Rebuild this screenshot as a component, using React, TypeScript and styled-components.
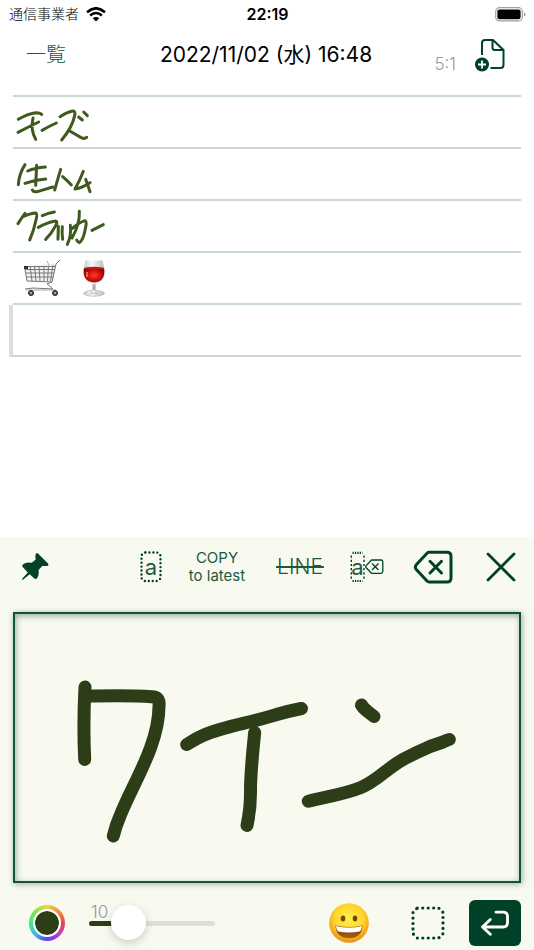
import React, { useState } from "react";
import styled, { createGlobalStyle } from "styled-components";

const GREEN = "#004128";
const INK = "#2c3d18";
const PAPER = "#f8f9ef";

const GlobalStyle = createGlobalStyle`
  * { box-sizing: border-box; }
  body {
    margin: 0;
    background: #fff;
    color: #000;
    font-family: Inter, "Noto Sans CJK JP", sans-serif;
  }
  button, input { font: inherit; }
`;

const Screen = styled.div`
  min-height: 100vh;
  display: flex;
  flex-direction: column;
`;

const StatusBar = styled.div`
  display: grid;
  grid-template-columns: 1fr auto 1fr;
  align-items: center;
  height: 28px;
  padding: 0 8px 0 9px;
`;

const Carrier = styled.div`
  display: flex;
  align-items: center;
  gap: 7px;
  font-size: 14px;
  line-height: 20px;
  font-weight: 300;
`;

const Clock = styled.div`
  font-size: 16px;
  font-weight: 600;
`;

const BatterySlot = styled.div`
  display: flex;
  justify-content: flex-end;
`;

const Header = styled.header`
  display: grid;
  grid-template-columns: 1fr auto 1fr;
  align-items: center;
  height: 54px;
  padding: 0 28px 0 26px;
`;

const ListLink = styled.a`
  color: #1a5a40;
  font-size: 20px;
  line-height: 28px;
  font-weight: 300;
  text-decoration: none;
`;

const Title = styled.h1`
  margin: 0;
  font-size: 21px;
  line-height: 28px;
  font-weight: 400;
`;

const HeaderEnd = styled.div`
  display: flex;
  justify-content: flex-end;
  align-items: center;
  gap: 18px;
`;

const Ratio = styled.span`
  padding-top: 18px;
  color: #98989c;
  font-size: 17px;
  font-weight: 300;
  line-height: 20px;
`;

const IconButton = styled.button<{ $width: number }>`
  display: flex;
  justify-content: center;
  align-items: center;
  flex: none;
  width: ${(p) => p.$width}px;
  padding: 0;
  border: 0;
  background: none;
  color: ${GREEN};
  cursor: pointer;

  svg { flex: none; display: block; }
`;

const Notes = styled.main`
  flex: 1;
  padding: 13px 13px 180px;
`;

const Lines = styled.ul`
  margin: 0;
  padding: 0;
  list-style: none;
  border-top: 2px solid #c9dad4;
`;

const Line = styled.li<{ $current?: boolean }>`
  display: flex;
  align-items: center;
  height: 52px;
  border-bottom: 2px solid #c9dad4;
  margin-left: ${(p) => (p.$current ? "-4px" : "0")};
  border-left: ${(p) => (p.$current ? "4px solid #dedede" : "0")};
`;

const Emojis = styled.span`
  display: flex;
  gap: 22px;
  padding-left: 10px;
`;

const Panel = styled.section`
  padding: 0 13px;
  background: ${PAPER};
`;

const Toolbar = styled.div`
  display: flex;
  align-items: center;
  gap: 20px;
  height: 60px;
`;

const PinSlot = styled.div`
  flex: 1;
  display: flex;
`;

const CopyButton = styled.button`
  width: 68px;
  padding: 0;
  border: 0;
  background: none;
  color: #1a5a40;
  font-size: 15px;
  line-height: 18px;
  white-space: nowrap;
  text-align: center;
  cursor: pointer;
`;

const StrikeButton = styled.button`
  width: 58px;
  padding: 0;
  border: 0;
  background: none;
  color: #1a5a40;
  font-size: 21px;
  font-weight: 300;
  line-height: 24px;
  cursor: pointer;
`;

const Struck = styled.s`
  padding: 0 1px;
  text-decoration: none;
  background: linear-gradient(#1a5a40, #1a5a40) center / 100% 2px no-repeat;
`;

const Canvas = styled.div`
  height: 271px;
  margin-top: 15px;
  border: 2px solid #12543b;
  box-shadow: 1px 1px 6px rgba(0, 65, 40, 0.4), inset 1px 2px 6px rgba(0, 65, 40, 0.4);

  svg { display: block; width: 100%; height: 100%; }
`;

const Controls = styled.div`
  display: flex;
  align-items: center;
  height: 67px;
  padding: 13px 0 0 16px;
`;

const ColorWell = styled.label`
  display: flex;
  flex: none;
  width: 36px;
  height: 36px;
  padding: 4px;
  border-radius: 50%;
  background: conic-gradient(#e8d84a, #f0913c 45deg, #e84545 90deg, #c43cc8 130deg, #6a3cf0 180deg, #3cb8f0 225deg, #40e890 270deg, #8ee050 315deg, #e8d84a);
`;

const ColorInput = styled.input`
  appearance: none;
  width: 28px;
  height: 28px;
  padding: 0;
  border: 2px solid #fff;
  border-radius: 50%;
  background: #fff;
  cursor: pointer;

  &::-webkit-color-swatch-wrapper { padding: 0; }
  &::-webkit-color-swatch { border: 0; border-radius: 50%; }
`;

const SliderGroup = styled.div`
  display: grid;
  width: 126px;
  margin-left: 24px;
`;

const SliderLabel = styled.label`
  grid-area: 1 / 1;
  align-self: start;
  justify-self: start;
  padding-left: 2px;
  color: #98989c;
  font-size: 17px;
  font-weight: 300;
  line-height: 14px;
`;

const Slider = styled.input`
  grid-area: 1 / 1;
  appearance: none;
  width: 126px;
  height: 36px;
  margin: 0;
  background: none;

  &::-webkit-slider-runnable-track {
    height: 5px;
    border-radius: 3px;
    background: linear-gradient(90deg, ${INK} 39px, #dddfd8 39px);
  }
  &::-webkit-slider-thumb {
    appearance: none;
    width: 35px;
    height: 35px;
    margin-top: -16px;
    border-radius: 50%;
    background: #fff;
    box-shadow: 0 3px 10px rgba(0, 0, 0, 0.18);
  }
`;

const ControlsEnd = styled.div`
  flex: 1;
  display: flex;
  justify-content: flex-end;
  align-items: center;
  gap: 20px;
`;

const ReturnButton = styled.button`
  display: flex;
  justify-content: center;
  align-items: center;
  width: 52px;
  height: 46px;
  padding: 0;
  border: 0;
  border-radius: 6px;
  background: ${GREEN};
  color: #fff;
  cursor: pointer;
`;

const Handwriting = ({ label, strokes, top }: { label: string; strokes: string; top: number }) => (
  <svg width="110" height="50" viewBox={`39 ${top} 330 150`} role="img" aria-label={label}>
    <path d={strokes} fill="none" stroke="#3e5a1e" strokeWidth="9" strokeLinecap="round" strokeLinejoin="round" />
  </svg>
);

const CHEESE =
  "M55 88Q85 70 108 68Q120 68 125 73M54 127Q85 111 116 96M99 84Q91 120 107 148M126 121Q145 110 169 99M180 80Q202 66 218 63Q227 62 224 77Q217 112 185 150M208 122Q235 138 246 144Q254 147 260 142M236 81L247 90M251 66L262 77";
const HAM =
  "M75 224Q57 252 55 284M83 243Q105 233 136 231M110 226L107 286M75 280Q105 269 137 267M97 300Q101 308 115 304Q135 298 158 291M182 238Q171 275 164 300M188 260Q203 273 214 285M250 244Q238 275 225 297Q245 294 270 278M257 268L265 290L270 305";
const CRACKER =
  "M54 101Q66 82 75 70M69 80Q90 70 107 69Q113 71 108 90Q101 124 89 150M127 77Q145 69 163 66M115 112Q145 96 167 93Q174 94 167 107Q156 129 137 148M175 109L174 148M187 110Q185 130 188 148M211 106Q215 136 202 163M216 116Q237 97 255 92Q261 94 257 112Q250 152 238 158Q234 157 230 150M238 64Q240 101 216 144M276 121Q294 112 310 104";

const WifiIcon = () => (
  <svg width="20" height="15" viewBox="0 0 20 15" aria-label="Wi-Fi">
    <g fill="none" stroke="#000" strokeWidth="2.6">
      <path d="M1 5.2Q10-2.6 19 5.2" />
      <path d="M4.1 8.6Q10 3.4 15.9 8.6" />
    </g>
    <path d="M10 14.6L6.8 11.3Q10 8.5 13.2 11.3Z" />
  </svg>
);

const BatteryIcon = () => (
  <svg width="31" height="15" viewBox="0 0 31 15" aria-label="バッテリー">
    <rect x=".7" y=".7" width="26.6" height="13.2" rx="4" fill="none" stroke="#a0a0a0" strokeWidth="1.2" />
    <rect x="2.4" y="2.4" width="23.2" height="9.8" rx="2.2" />
    <path d="M29 5Q30.6 6 30.6 7.3T29 9.6Z" fill="#a0a0a0" />
  </svg>
);

const NewPageIcon = () => (
  <svg width="31" height="34" viewBox="0 0 31 34" aria-hidden="true">
    <g fill="none" stroke="currentColor" strokeWidth="2">
      <path d="M7 17V5Q7 2 10 2H18L28.500 12V27Q28.500 30 25.500 30H15.500" />
      <path d="M17.500 2V9.500Q17.500 12 20 12H28.500" />
    </g>
    <circle cx="7" cy="26.500" r="7" fill="currentColor" />
    <path d="M7 22.500V30.500M3 26.500H11" stroke="#fff" strokeWidth="1.800" />
  </svg>
);

const PinIcon = () => (
  <svg width="28" height="28" viewBox="0 0 28 28" fill="currentColor" aria-hidden="true">
    <path d="M15 .5Q16-.4 17 .5L27 10.500Q28 12 26.900 12.800Q24 13.300 21.500 12.800L17.500 17Q18.500 22 15.800 25.600Q14.700 26.500 13.500 25.500L8.600 21.200L2 26.700Q.9 27 1.200 25.700L6.800 19.400L1.700 14Q.9 12.800 1.800 11.500Q5.500 8.500 10.800 9.800L14.700 6.500Q13.900 2.800 15 .5Z" />
  </svg>
);

const CharBoxIcon = () => (
  <svg width="22" height="32" viewBox="0 0 22 32" aria-hidden="true">
    <rect x="1.500" y="1.500" width="19" height="28.500" rx="4" fill="none" stroke="currentColor" strokeWidth="2.400" strokeLinecap="round" strokeDasharray="0 3.960" />
    <text x="11" y="24" textAnchor="middle" fontSize="22" fill="#1a5a40">a</text>
  </svg>
);

const CharDeleteIcon = () => (
  <svg width="34" height="32" viewBox="0 0 34 32" aria-hidden="true">
    <path d="M2.500 1.800H12.500M2.500 30H12.500" fill="none" stroke="currentColor" strokeWidth="2.200" strokeDasharray="1.300 1.100" />
    <path d="M1.300 4.500V28M14 4.500V28" fill="none" stroke="currentColor" strokeWidth="1.400" strokeDasharray="2.200 2" />
    <text x="7.500" y="24" textAnchor="middle" fontSize="22" fill="#1a5a40">a</text>
    <path d="M21.500 9H31Q32.800 9 32.800 10.800V20.500Q32.800 22.300 31 22.300H21.500L16 16.500Q15.300 15.700 16 14.900ZM22 12.500L28.500 19M28.500 12.500L22 19" fill={PAPER} stroke="currentColor" strokeWidth="1.300" strokeLinejoin="round" />
  </svg>
);

const BackspaceIcon = () => (
  <svg width="40" height="34" viewBox="0 0 40 34" fill="none" stroke="currentColor" strokeWidth="3" strokeLinecap="round" strokeLinejoin="round" aria-hidden="true">
    <path d="M16 2.200H34Q38 2.200 38 6.200V28Q38 32 34 32H16Q15 32 14 31L3.300 19.500Q1.300 17 3.300 14.700L14 3.200Q15 2.200 16 2.200Z" />
    <path d="M17 11.300L28.500 23M28.500 11.300L17 23" />
  </svg>
);

const CloseIcon = () => (
  <svg width="30" height="30" viewBox="0 0 30 30" fill="none" stroke="currentColor" strokeWidth="2.800" strokeLinecap="round" aria-hidden="true">
    <path d="M2 2L28 28M28 2L2 28" />
  </svg>
);

const SelectIcon = () => (
  <svg width="34" height="34" viewBox="0 0 34 34" aria-hidden="true">
    <path d="M6.300 2H27.700L32 6.300V27.700L27.700 32H6.300L2 27.700V6.300Z" fill="none" stroke="currentColor" strokeWidth="3.200" strokeLinecap="round" strokeDasharray="0 5.450" />
  </svg>
);

const ReturnIcon = () => (
  <svg width="30" height="26" viewBox="0 0 30 26" fill="none" stroke="currentColor" strokeWidth="2.800" strokeLinecap="round" strokeLinejoin="round" aria-hidden="true">
    <path d="M16 2.200H23Q27.500 2.200 27.500 6.500V12.800Q27.500 17 23 17H2.500M10.300 9.500L2.500 17L10.300 24.300" />
  </svg>
);

const CartEmoji = () => (
  <svg width="37" height="38" viewBox="0 0 37 38" role="img" aria-label="ショッピングカート">
    <path d="M1.500 8L4 22L30 22L34 4" fill="#f2f2f2" />
    <path d="M1.500 7.500H32M2 10.500H32M3 14H31M3.500 18H30M1.500 7.500L4 22L29 23L33 5L37 1M7 7L9 22M11.500 7L13 22M16 7L17 22M21 7V22M25.500 7L24.500 22M30 6L27.500 22M29 23L24 25L29 29V31M2 30L10 29L30 30" fill="none" stroke="#777" strokeWidth="1" />
    <path d="M24 2L27 8M3 31H33" fill="none" stroke="#aaa" strokeWidth="1" />
    <rect x="1" y="7" width="4" height="3" fill="#234" />
    <g fill="#555" stroke="#2b2424"><circle cx="8" cy="34" r="2.500" /><circle cx="32" cy="34" r="2.500" /></g>
    <g fill="#bbb"><circle cx="8" cy="34" r="1" /><circle cx="32" cy="34" r="1" /></g>
  </svg>
);

const WineEmoji = () => (
  <svg width="24" height="38" viewBox="0 0 24 38" role="img" aria-label="ワイングラス">
    <defs>
      <radialGradient id="wine"><stop offset="0" stopColor="#ff3a2a" /><stop offset=".6" stopColor="#d9110b" /><stop offset="1" stopColor="#8c0907" /></radialGradient>
      <linearGradient id="glass"><stop offset="0" stopColor="#c8c8c8" /><stop offset=".4" stopColor="#f8f8f8" /><stop offset="1" stopColor="#bbb" /></linearGradient>
    </defs>
    <ellipse cx="12" cy="34.300" rx="10.500" ry="2.900" fill="url(#glass)" stroke="#aaa" strokeWidth=".6" />
    <path d="M10.500 23H13.500V32Q14 34 16 34.500H8Q10 34 10.500 32Z" fill="url(#glass)" stroke="#aaa" strokeWidth=".5" />
    <path d="M3.500 1.500H20.500Q27 24 12 24.500Q-3 24 3.500 1.500Z" fill="url(#glass)" />
    <path d="M1.900 9Q12 11 22.100 9Q24 22.500 12 23.500Q0 22.500 1.900 9Z" fill="url(#wine)" />
    <ellipse cx="12" cy="9.300" rx="10" ry="1.500" fill="#b91b14" />
    <path d="M5 13V18" stroke="#ff9488" strokeWidth="1.200" />
    <path d="M12 25.500V31" stroke="#a55" strokeWidth="1" />
  </svg>
);

const SmileEmoji = () => (
  <svg width="40" height="40" viewBox="0 0 40 40" aria-hidden="true">
    <defs>
      <radialGradient id="face" cx=".5" cy=".4" r=".62"><stop offset="0" stopColor="#fff04a" /><stop offset=".6" stopColor="#ffd52c" /><stop offset="1" stopColor="#ee8212" /></radialGradient>
      <linearGradient id="mouth" x2="0" y2="1"><stop offset="0" stopColor="#6e3908" /><stop offset="1" stopColor="#a8620a" /></linearGradient>
    </defs>
    <circle cx="20" cy="20" r="19.800" fill="url(#face)" />
    <ellipse cx="14" cy="15.500" rx="2.300" ry="3" fill="#7b4407" />
    <ellipse cx="26" cy="15.500" rx="2.300" ry="3" fill="#7b4407" />
    <path d="M6.500 22.500Q20 25.500 33.500 22.500Q33 35 20 35.300Q7 35 6.500 22.500Z" fill="url(#mouth)" />
    <path d="M7 23Q20 26 33 23Q32.500 27.500 30.500 28.500Q20 30.500 9.500 28.500Q7.500 27.500 7 23Z" fill="#fff" />
  </svg>
);

export default function App() {
  const [size, setSize] = useState(10);
  const [color, setColor] = useState(INK);

  return (
    <Screen>
      <GlobalStyle />
      <StatusBar>
        <Carrier>通信事業者<WifiIcon /></Carrier>
        <Clock>22:19</Clock>
        <BatterySlot><BatteryIcon /></BatterySlot>
      </StatusBar>
      <Header>
        <ListLink href="#list">一覧</ListLink>
        <Title>2022/11/02 (水) 16:48</Title>
        <HeaderEnd>
          <Ratio>5:1</Ratio>
          <IconButton $width={32} aria-label="新規ページ"><NewPageIcon /></IconButton>
        </HeaderEnd>
      </Header>
      <Notes>
        <Lines>
          <Line><Handwriting label="チーズ" strokes={CHEESE} top={21} /></Line>
          <Line><Handwriting label="生ハム" strokes={HAM} top={177} /></Line>
          <Line><Handwriting label="クラッカー" strokes={CRACKER} top={33} /></Line>
          <Line><Emojis><CartEmoji /><WineEmoji /></Emojis></Line>
          <Line $current />
        </Lines>
      </Notes>
      <Panel>
        <Toolbar>
          <PinSlot><IconButton $width={44} aria-label="固定"><PinIcon /></IconButton></PinSlot>
          <IconButton $width={24} aria-label="文字を選択"><CharBoxIcon /></IconButton>
          <CopyButton>COPY<br />to latest</CopyButton>
          <StrikeButton><Struck>LINE</Struck></StrikeButton>
          <IconButton $width={36} aria-label="文字を削除"><CharDeleteIcon /></IconButton>
          <IconButton $width={56} aria-label="削除"><BackspaceIcon /></IconButton>
          <IconButton $width={40} aria-label="閉じる"><CloseIcon /></IconButton>
        </Toolbar>
        <Canvas>
          <svg viewBox="15 614 504 267" role="img" aria-label="ワイン">
            <g fill="none" stroke={color} strokeWidth="13" strokeLinecap="round" strokeLinejoin="round">
              <path d="M85 687Q83 725 84.700 759.500" />
              <path d="M86 696Q140 695 154 697Q160 698 159 706C159 745 132 785 120 816Q116 825 113.300 836" />
              <path d="M186.700 744.500C191 742 195 739 203 735.500C222 727 244 724 270 716.500Q288 711 301.500 708.500" />
              <path d="M254.700 732.500Q251 768 250.500 787Q251 807 247 825.500" />
              <path d="M361.500 705Q363 708 367 711L374 716.500" />
              <path d="M308.300 801.300C330 796 345 794 361 787.500C377 781 386 769 403 759.500Q415 753 430 746.500L443 742Q447 740 449.300 739.500" />
            </g>
          </svg>
        </Canvas>
        <Controls>
          <ColorWell>
            <ColorInput type="color" aria-label="ペンの色" value={color} onChange={(e) => setColor(e.target.value)} />
          </ColorWell>
          <SliderGroup>
            <Slider id="size" type="range" min={1} max={38} value={size} onChange={(e) => setSize(Number(e.target.value))} />
            <SliderLabel htmlFor="size">{size}</SliderLabel>
          </SliderGroup>
          <ControlsEnd>
            <IconButton $width={76} aria-label="絵文字"><SmileEmoji /></IconButton>
            <IconButton $width={42} aria-label="範囲選択"><SelectIcon /></IconButton>
            <ReturnButton aria-label="改行"><ReturnIcon /></ReturnButton>
          </ControlsEnd>
        </Controls>
      </Panel>
    </Screen>
  );
}
